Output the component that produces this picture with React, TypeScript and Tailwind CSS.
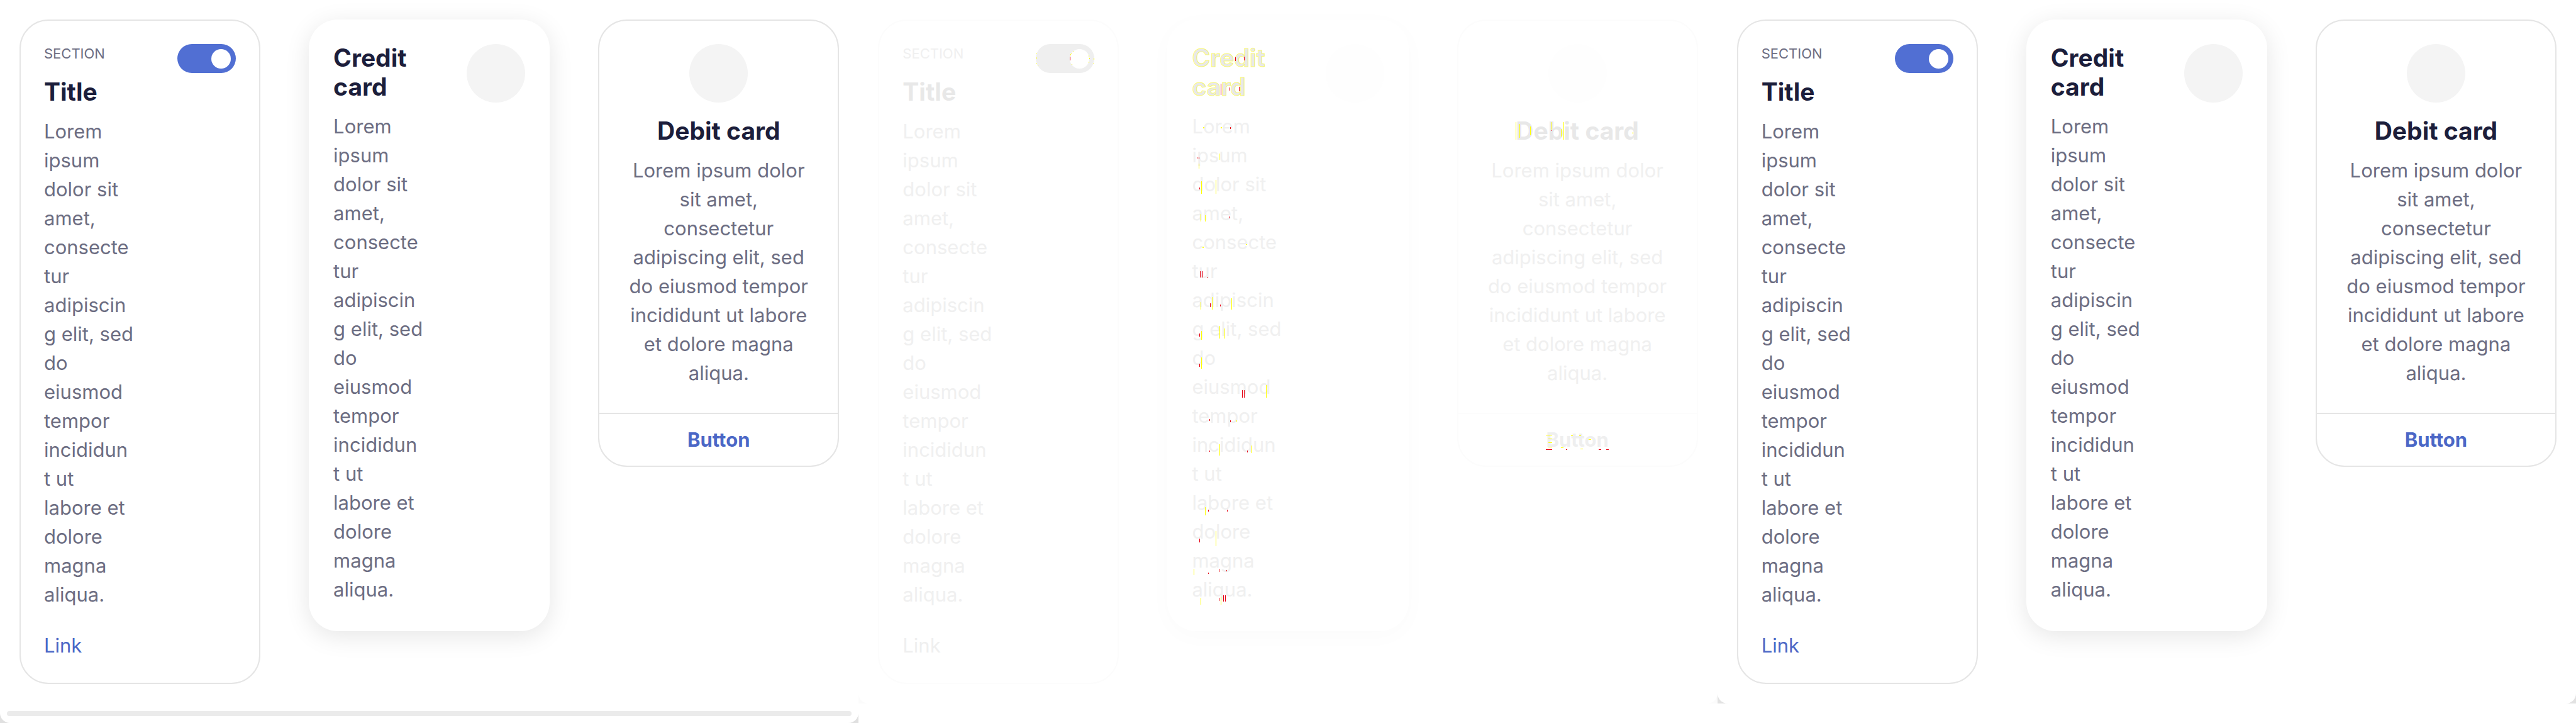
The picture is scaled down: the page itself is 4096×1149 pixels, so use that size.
const narrowLines = [
  'Lorem', 'ipsum', 'dolor sit', 'amet,', 'consecte', 'tur', 'adipiscin', 'g elit, sed', 'do',
  'eiusmod', 'tempor', 'incididun', 't ut', 'labore et', 'dolore', 'magna', 'aliqua.',
];

const wideLines = [
  'Lorem ipsum dolor', 'sit amet,', 'consectetur', 'adipiscing elit, sed', 'do eiusmod tempor',
  'incididunt ut labore', 'et dolore magna', 'aliqua.',
];

const themes = {
  normal: {
    border: 'border-[#e5e5e5]',
    title: 'text-[#1c1e3b]',
    body: 'text-[#6c6d82]',
    link: 'text-[#4b67c6]',
    toggle: 'bg-[#516fd3]',
    circle: 'bg-[#f4f4f4]',
    shadow: 'shadow-[0_8px_39px_rgba(0,0,0,0.1)]',
  },
  faded: {
    border: 'border-[#fcfcfc]',
    title: 'text-[#e8e8e8]',
    body: 'text-[#f0f0f0]',
    link: 'text-[#efefef]',
    toggle: 'bg-[#efefef]',
    circle: 'bg-[#fefefe]',
    shadow: 'shadow-[0_8px_39px_rgba(0,0,0,0.02)]',
  },
};

type Theme = (typeof themes)['normal'];

function Lines({ lines, theme, className }: { lines: string[]; theme: Theme; className: string }) {
  return (
    <p className={`text-[31px] leading-[46px] whitespace-pre ${theme.body} ${className}`}>
      {lines.join('\n')}
    </p>
  );
}

function SectionCard({ theme, marks }: { theme: Theme; marks: boolean }) {
  return (
    <article className={`rounded-[46px] border-2 px-[37px] pt-[37px] pb-[36px] ${theme.border}`}>
      <div className="flex items-start justify-between">
        <div>
          <p className={`text-[22px] leading-[30px] ${theme.body}`}>SECTION</p>
          <h2 className={`mt-[23px] text-[39px] leading-[46px] font-bold ${theme.title}`}>Title</h2>
          <Lines lines={narrowLines} theme={theme} className="mt-[17px]" />
        </div>
        <button
          type="button"
          role="switch"
          aria-checked="true"
          aria-label="Title"
          className={`relative flex h-[46px] w-[93px] items-center justify-end rounded-full px-2 ${theme.toggle}`}
        >
          <span className="size-[31px] rounded-full bg-white" />
          {marks && <DiffMarks width={93} height={46} spots={toggleSpots} />}
        </button>
      </div>
      <a href="#link" className={`mt-[35px] inline-block text-[31px] leading-[46px] ${theme.link}`}>
        Link
      </a>
    </article>
  );
}

type Spot = [number, number, number, number, string];

const Y = '#ffff00';
const R = '#e60012';

const toggleSpots: Spot[] = [
  [0, 21, 1, 3, Y], [1, 15, 1, 1, Y], [1, 30, 1, 1, Y], [3, 34, 1, 1, Y],
  [54, 20, 1, 6, R], [55, 16, 1, 2, Y], [56, 14, 1, 1, Y], [57, 32, 1, 1, Y], [60, 11, 1, 1, Y],
  [84, 18, 1, 2, Y], [85, 22, 1, 2, Y], [84, 28, 1, 2, Y], [92, 22, 1, 3, Y], [91, 31, 1, 1, Y],
];

const creditSpots: Spot[] = [
  [69, 22, 1, 6, R], [83, 21, 1, 6, R], [46, 64, 1, 18, R], [60, 70, 1, 5, R], [75, 69, 1, 7, R],
  [18, 133, 2, 2, Y], [46, 133, 2, 2, Y], [61, 133, 1, 3, R],
  [8, 181, 1, 2, R], [11, 181, 1, 3, R], [11, 191, 1, 8, Y], [43, 175, 1, 10, Y],
  [12, 229, 1, 3, R], [15, 219, 1, 20, Y], [38, 217, 1, 22, Y],
  [14, 271, 1, 12, Y], [21, 273, 1, 10, Y], [59, 275, 1, 3, R],
  [17, 323, 2, 2, Y], [86, 319, 2, 1, Y],
  [13, 362, 1, 10, R], [17, 362, 1, 10, R], [25, 371, 1, 2, R],
  [14, 411, 1, 12, Y], [29, 413, 1, 6, R], [32, 403, 1, 20, Y], [45, 415, 1, 3, R], [63, 405, 1, 18, Y],
  [12, 461, 1, 5, R], [15, 457, 1, 14, Y], [44, 449, 1, 20, Y], [52, 453, 1, 16, Y],
  [12, 509, 1, 5, R], [15, 499, 1, 18, Y],
  [80, 551, 1, 12, R], [83, 551, 1, 12, R], [118, 543, 1, 20, Y],
  [28, 597, 1, 3, R], [61, 599, 1, 3, R], [71, 599, 1, 2, Y],
  [28, 647, 1, 2, R], [44, 637, 1, 18, Y], [88, 647, 1, 3, R], [94, 639, 1, 12, Y],
  [21, 737, 1, 13, Y], [26, 741, 1, 3, R], [56, 741, 1, 3, R],
  [12, 787, 1, 6, R], [38, 775, 1, 24, Y],
  [3, 835, 1, 10, Y], [26, 841, 1, 2, R], [43, 835, 1, 5, R], [55, 837, 1, 2, R],
  [14, 881, 1, 12, Y], [43, 881, 1, 5, R], [46, 879, 1, 24, Y], [50, 877, 1, 10, R], [53, 877, 1, 10, R],
];

const debitSpots: Spot[] = [
  [0, 9, 1, 28, Y], [6, 12, 1, 22, Y], [23, 16, 1, 14, Y],
  [57, 9, 1, 12, Y], [57, 22, 1, 1, R], [72, 20, 1, 12, Y], [76, 9, 1, 28, Y], [186, 25, 1, 3, Y],
];

const buttonSpots: Spot[] = [
  [0, 11, 10, 1, Y], [4, 17, 6, 1, Y], [4, 23, 6, 1, Y], [4, 30, 6, 1, Y], [0, 34, 10, 1, R],
  [24, 31, 4, 1, Y], [32, 34, 2, 1, R], [40, 12, 3, 1, Y], [53, 12, 3, 1, Y], [55, 33, 4, 1, Y],
  [68, 18, 4, 1, Y], [84, 34, 4, 1, R], [96, 34, 4, 1, R],
];

/* Coloured pixels that flag where two renders of the same card differ. */
function DiffMarks({ width, height, spots }: { width: number; height: number; spots: Spot[] }) {
  return (
    <svg
      aria-hidden="true"
      className="pointer-events-none absolute top-0 left-0"
      width={width}
      height={height}
      shapeRendering="crispEdges"
    >
      {spots.map(([x, y, w, h, fill], i) => (
        <rect key={i} x={x} y={y} width={w} height={h} fill={fill} />
      ))}
    </svg>
  );
}

function CreditCard({ theme, marks }: { theme: Theme; marks: boolean }) {
  return (
    <article
      className={`flex items-start justify-between rounded-[46px] bg-white px-[39px] pt-[38px] pb-[43px] ${theme.shadow}`}
    >
      <div className="relative">
        <h2
          className={`text-[39px] leading-[46px] font-bold ${theme.title} ${
            marks ? '[-webkit-text-stroke:1px_rgba(255,255,0,0.55)]' : ''
          }`}
        >
          Credit
          <br />
          card
        </h2>
        <Lines lines={narrowLines} theme={theme} className="mt-[17px]" />
        {marks && <DiffMarks width={150} height={892} spots={creditSpots} />}
      </div>
      <div className={`mt-px size-[93px] rounded-full ${theme.circle}`} />
    </article>
  );
}

function DebitCard({ theme, marks }: { theme: Theme; marks: boolean }) {
  return (
    <article className={`rounded-[46px] border-2 text-center ${theme.border}`}>
      <div className="flex flex-col items-center px-[37px] pt-[37px] pb-[40px]">
        <div className={`size-[93px] rounded-full ${theme.circle}`} />
        <h2 className={`relative mt-[22px] text-[39px] leading-[46px] font-bold ${theme.title}`}>
          Debit card
          {marks && <DiffMarks width={194} height={46} spots={debitSpots} />}
        </h2>
        <Lines lines={wideLines} theme={theme} className="mt-[17px]" />
      </div>
      <button
        type="button"
        className={`w-full border-t-2 py-[18px] text-[31px] leading-[46px] font-bold ${theme.border} ${theme.link}`}
      >
        <span className="relative">
          Button
          {marks && <DiffMarks width={102} height={46} spots={buttonSpots} />}
        </span>
      </button>
    </article>
  );
}

function Cards({ theme, marks = false }: { theme: Theme; marks?: boolean }) {
  return (
    <div className="grid grid-cols-3 items-start gap-[77px] p-[31px]">
      <SectionCard theme={theme} marks={marks} />
      <CreditCard theme={theme} marks={marks} />
      <DebitCard theme={theme} marks={marks} />
    </div>
  );
}

export default function App() {
  return (
    <main className="grid min-h-screen grid-cols-3 items-start overflow-hidden bg-white font-['Inter',sans-serif]">
      <section className="self-stretch bg-[#e0e0e0]">
        <div className="flex h-full flex-col justify-between rounded-b-[16px] bg-white">
          <Cards theme={themes.normal} />
          <div className="mx-[11px] mb-[11px] h-2 rounded-full bg-[#ebebeb]" />
        </div>
      </section>
      <section className="bg-[#fbfbfb]">
        <div className="rounded-b-[16px] bg-white">
          <Cards theme={themes.faded} marks />
        </div>
      </section>
      <section className="bg-[#e2e2e2]">
        <div className="rounded-b-[16px] bg-white">
          <Cards theme={themes.normal} />
        </div>
      </section>
    </main>
  );
}
